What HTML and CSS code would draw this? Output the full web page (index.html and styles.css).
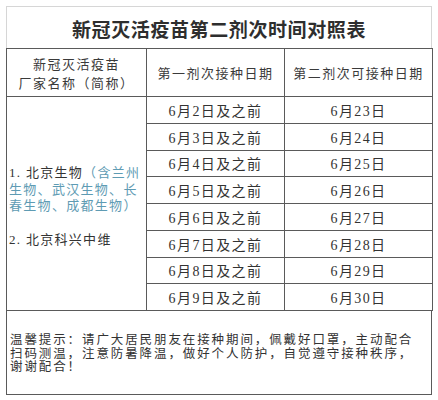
FILE: index.html
```html
<!DOCTYPE html>
<html lang="zh">
<head>
<meta charset="utf-8">
<link rel="stylesheet" href="styles.css">
</head>
<body>
<div class="sheet">
  <div class="title">新冠灭活疫苗第二剂次时间对照表</div>
  <table class="grid">
    <colgroup>
      <col class="c1"><col class="c2"><col class="c3">
    </colgroup>
    <thead>
      <tr class="head">
        <th class="maker-head">新冠灭活疫苗<br>厂家名称（简称）</th>
        <th>第一剂次接种日期</th>
        <th>第二剂次可接种日期</th>
      </tr>
    </thead>
    <tbody>
      <tr>
        <td class="makers" rowspan="8">
          <div class="line">1. 北京生物<span class="blue">（含兰州</span></div>
          <div class="line blue">生物、武汉生物、长</div>
          <div class="line blue">春生物、成都生物）</div>
          <div class="line m2">2. 北京科兴中维</div>
        </td>
        <td>6月2日及之前</td><td>6月23日</td>
      </tr>
      <tr><td>6月3日及之前</td><td>6月24日</td></tr>
      <tr><td>6月4日及之前</td><td>6月25日</td></tr>
      <tr><td>6月5日及之前</td><td>6月26日</td></tr>
      <tr><td>6月6日及之前</td><td>6月27日</td></tr>
      <tr><td>6月7日及之前</td><td>6月28日</td></tr>
      <tr><td>6月8日及之前</td><td>6月29日</td></tr>
      <tr><td>6月9日及之前</td><td>6月30日</td></tr>
    </tbody>
  </table>
  <div class="notes">温馨提示：请广大居民朋友在接种期间，佩戴好口罩，主动配合扫码测温，注意防暑降温，做好个人防护，自觉遵守接种秩序，谢谢配合！</div>
</div>
</body>
</html>
```

FILE: styles.css
```css
html, body {
  margin: 0;
  padding: 0;
  background: #ffffff;
}

body {
  font-family: "Liberation Serif", "Noto Sans CJK SC", serif;
  color: #333333;
}

.sheet {
  margin: 6px 0 0 6px;
  width: 426px;
}

.title {
  box-sizing: border-box;
  height: 42px;
  border: 1px solid #d6d6d6;
  border-bottom: none;
  display: flex;
  align-items: center;
  justify-content: center;
  font-family: "Noto Sans CJK SC", serif;
  font-weight: 700;
  font-size: 19px;
  letter-spacing: 0.6px;
  color: #2e2e2e;
  padding-top: 1px;
}

.grid {
  width: 426px;
  border-collapse: collapse;
  table-layout: fixed;
}

.c1 { width: 140px; }
.c2 { width: 138px; }
.c3 { width: 148px; }

.grid th,
.grid td {
  border: 1px solid #5a5a5a;
  padding: 0;
  text-align: center;
  vertical-align: middle;
}

.head th {
  height: 47px;
  font-weight: 400;
  font-family: "Noto Sans CJK SC", serif;
  font-size: 13px;
  letter-spacing: 1.5px;
  color: #3a3a3a;
}

.maker-head {
  line-height: 19px;
}

.grid tbody tr {
  height: 26.75px;
}

.grid tbody td {
  font-family: "Liberation Serif", "Noto Sans CJK SC", serif;
  font-size: 14px;
  letter-spacing: 1.4px;
  color: #333333;
}

.grid tbody td.makers {
  text-align: left;
  vertical-align: top;
  padding: 68px 2px 0 2px;
  font-family: "Liberation Serif", "Noto Sans CJK SC", serif;
  font-size: 13px;
  letter-spacing: 1.3px;
}

.makers .line {
  height: 16.5px;
  line-height: 16.5px;
  white-space: nowrap;
}

.makers .m2 {
  margin-top: 17px;
}

.blue {
  color: #5e9bb3;
}

.notes {
  box-sizing: border-box;
  height: 84px;
  border: 1px solid #5a5a5a;
  border-top: none;
  padding: 21px 4px 0 3px;
  font-family: "Noto Sans CJK SC", serif;
  font-size: 12.5px;
  letter-spacing: 1.9px;
  line-height: 13.5px;
  color: #333333;
}
```
